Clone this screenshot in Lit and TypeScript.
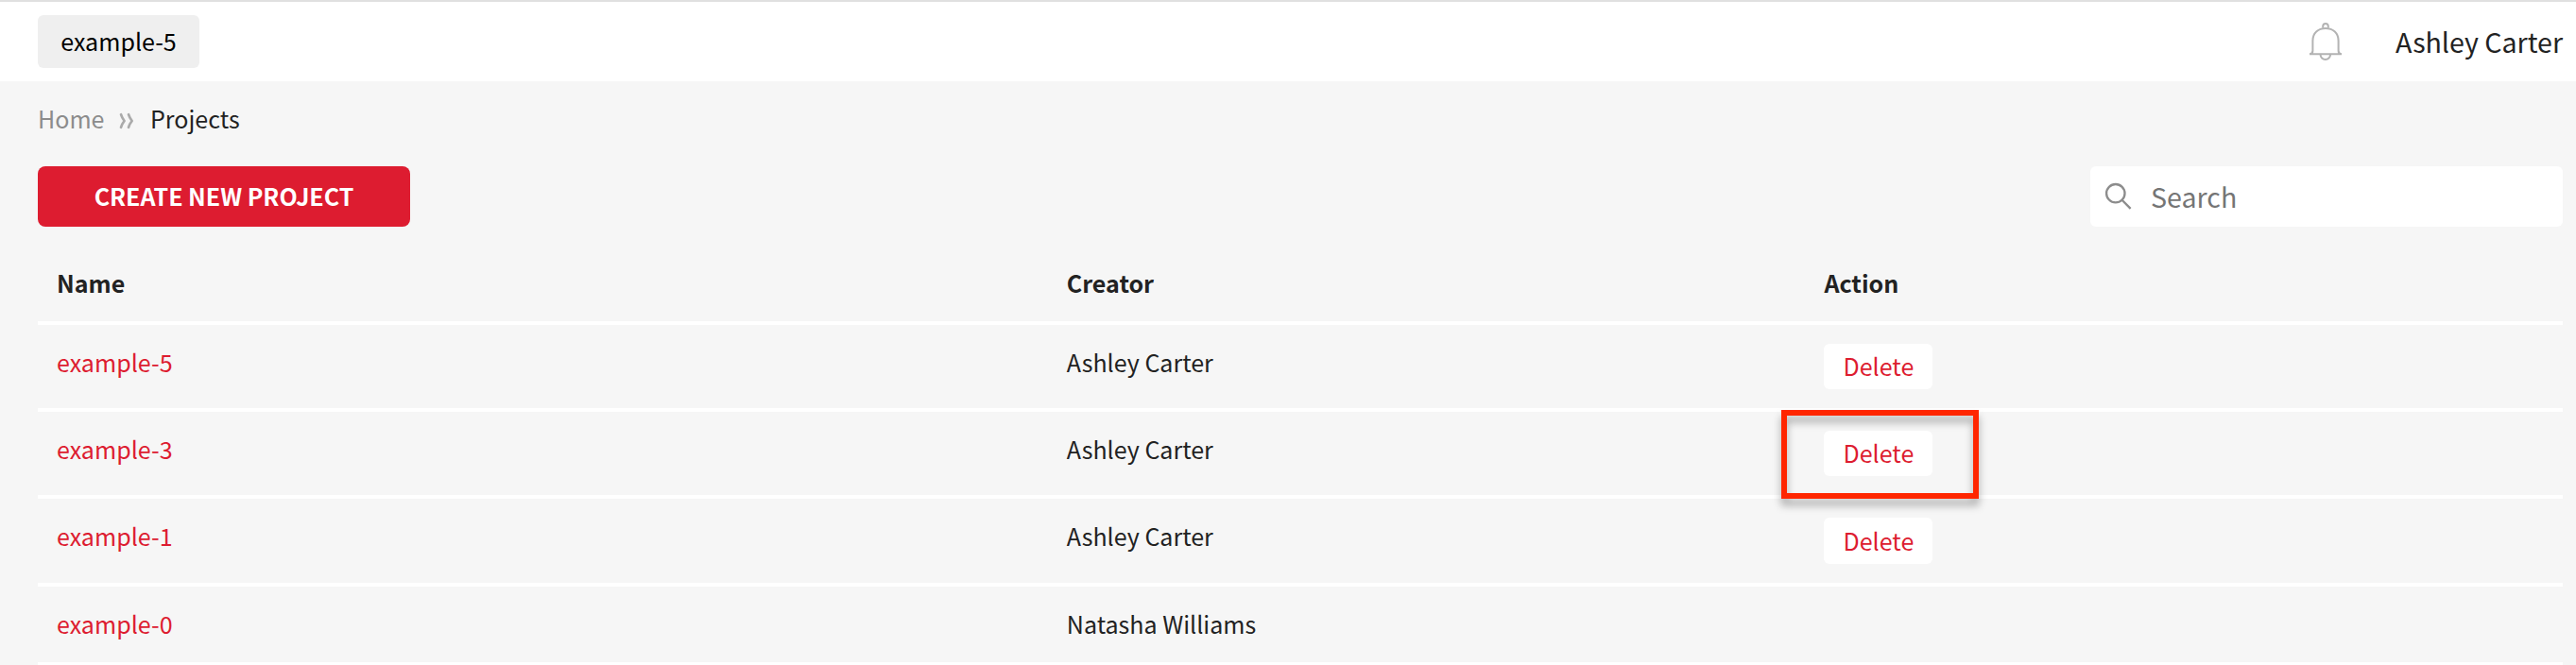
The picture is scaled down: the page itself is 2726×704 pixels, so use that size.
import { LitElement, html, css, svg, nothing } from "lit";
import { customElement, state } from "lit/decorators.js";

interface Project {
  name: string;
  creator: string;
  deletable: boolean;
  highlighted?: boolean;
}

const bellIcon = svg`<svg class="bell" width="36" height="42" viewBox="0 0 36 42" fill="none" stroke="#b3b3b3" stroke-width="2">
  <path d="M15.2 6.6V4.8a2.8 2.8 0 0 1 5.6 0v1.8"/>
  <path d="M1 34.2c2.200 0 3.400-1.200 3.400-3.400V20C4.400 12 10 6.900 18 6.900S31.600 12 31.600 20v10.800c0 2.200 1.200 3.400 3.400 3.400z"/>
  <path d="M12.600 34.900a5.200 5.200 0 0 0 10.400 0"/>
</svg>`;

const searchIcon = svg`<svg class="search-icon" width="30" height="30" viewBox="0 0 30 30" fill="none" stroke="#8c8c8c" stroke-width="2.300">
  <circle cx="11.800" cy="11.700" r="9.700"/>
  <path d="M18.600 18.700l9 9.200"/>
</svg>`;

const chevrons = svg`<svg class="chevrons" width="16" height="18" viewBox="0 0 16 18" fill="none" stroke="#aaa" stroke-width="2.700" stroke-linecap="round" stroke-linejoin="round">
  <path d="M2 2.200Q3.200 6 5.600 9Q3.200 12 2 15.800M10 2.200Q11.200 6 13.700 9Q11.200 12 10 15.800"/>
</svg>`;

@customElement("app-root")
export class AppRoot extends LitElement {
  @state() private projects: Project[] = [
    { name: "example-5", creator: "Ashley Carter", deletable: true },
    { name: "example-3", creator: "Ashley Carter", deletable: true, highlighted: true },
    { name: "example-1", creator: "Ashley Carter", deletable: true },
    { name: "example-0", creator: "Natasha Williams", deletable: false },
  ];

  static styles = css`
    :host {
      display: block;
      height: 704px;
      overflow: hidden;
      box-sizing: border-box;
      background: #f6f6f6;
      color: #222;
      font-family: "Noto Sans CJK JP", "Noto Sans CJK SC", sans-serif;
      font-size: 25.05px;
      line-height: 40px;
    }
    * { box-sizing: border-box; }
    button { border: 0; margin: 0; font: inherit; white-space: nowrap; }
    a { text-decoration: none; color: inherit; }
    svg { display: block; flex: none; }
    .topbar {
      display: flex;
      justify-content: space-between;
      align-items: flex-start;
      height: 86px;
      padding: 14px 14px 0 40px;
      border-top: 2px solid #e0e0e0;
      background: #fff;
    }
    .chip {
      width: 171px;
      height: 56px;
      padding: 7px 0 9px;
      border-radius: 6px;
      background: #efefef;
      color: #000;
    }
    .account { display: flex; align-items: flex-start; }
    .bell { margin: 7px 56px 0 0; }
    .user { font-size: 28.6px; line-height: 56px; }
    .page { padding: 19px 14px 0 40px; }
    .crumbs { display: flex; align-items: center; height: 40px; }
    .home { color: #8c8c8c; width: 86px; }
    .chevrons { margin: 6px 17px 0 0; }
    .toolbar { display: flex; justify-content: space-between; margin-top: 31px; }
    .create {
      width: 394px;
      height: 64px;
      padding: 0 0 2px;
      border-radius: 8px;
      background: #dd1c30;
      color: #fff;
      font-weight: 700;
      letter-spacing: -0.05px;
    }
    .search {
      display: flex;
      width: 500px;
      height: 64px;
      border-radius: 6px;
      background: #fff;
    }
    .search-icon { margin: 17px 0 0 15px; }
    .search input {
      flex: 1;
      min-width: 0;
      border: 0;
      outline: 0;
      padding: 0 0 0 19px;
      background: transparent;
      font: inherit;
      font-size: 28.6px;
    }
    .search input::placeholder { color: #757575; opacity: 1; }
    .row {
      display: grid;
      grid-template-columns: 40% 30% 30%;
      align-items: start;
      height: 92px;
      padding-top: 19px;
      border-bottom: 4px solid #fff;
    }
    .row.head { height: 104px; padding-top: 39px; font-weight: 700; }
    .row.tall { height: 93px; }
    .row.plain { height: 84px; }
    .cell { padding-left: 20px; }
    .link { color: #dd1c30; }
    .action { position: relative; width: 115px; margin-top: 1px; }
    .delete {
      display: block;
      width: 115px;
      height: 48px;
      padding: 0 0 3px;
      border-radius: 6px;
      background: #fff;
      color: #dd1c30;
    }
    .tall .delete { height: 49px; padding-bottom: 2px; }
    .marker {
      position: absolute;
      left: -45px;
      top: -22px;
      width: 209px;
      height: 94px;
      border: 6px solid #ff2600;
      filter: drop-shadow(0 7px 4px rgba(0, 0, 0, 0.32));
      pointer-events: none;
      z-index: 1;
    }
  `;

  private renderRow(p: Project, i: number) {
    const size = i === 2 ? "tall" : p.deletable ? "" : "plain";
    return html`<div class="row ${size}">
      <div class="cell"><a class="link" href="#">${p.name}</a></div>
      <div class="cell">${p.creator}</div>
      <div class="cell">
        ${p.deletable
          ? html`<div class="action">
              <button class="delete">Delete</button>
              ${p.highlighted ? html`<div class="marker"></div>` : nothing}
            </div>`
          : nothing}
      </div>
    </div>`;
  }

  render() {
    return html`
      <header class="topbar">
        <button class="chip">example-5</button>
        <div class="account">${bellIcon}<span class="user">Ashley Carter</span></div>
      </header>
      <main class="page">
        <nav class="crumbs">
          <a class="home" href="#">Home</a>${chevrons}<span>Projects</span>
        </nav>
        <div class="toolbar">
          <button class="create">CREATE NEW PROJECT</button>
          <label class="search">${searchIcon}<input type="text" placeholder="Search" /></label>
        </div>
        <section>
          <div class="row head">
            <div class="cell">Name</div>
            <div class="cell">Creator</div>
            <div class="cell">Action</div>
          </div>
          ${this.projects.map((p, i) => this.renderRow(p, i))}
        </section>
      </main>
    `;
  }
}
